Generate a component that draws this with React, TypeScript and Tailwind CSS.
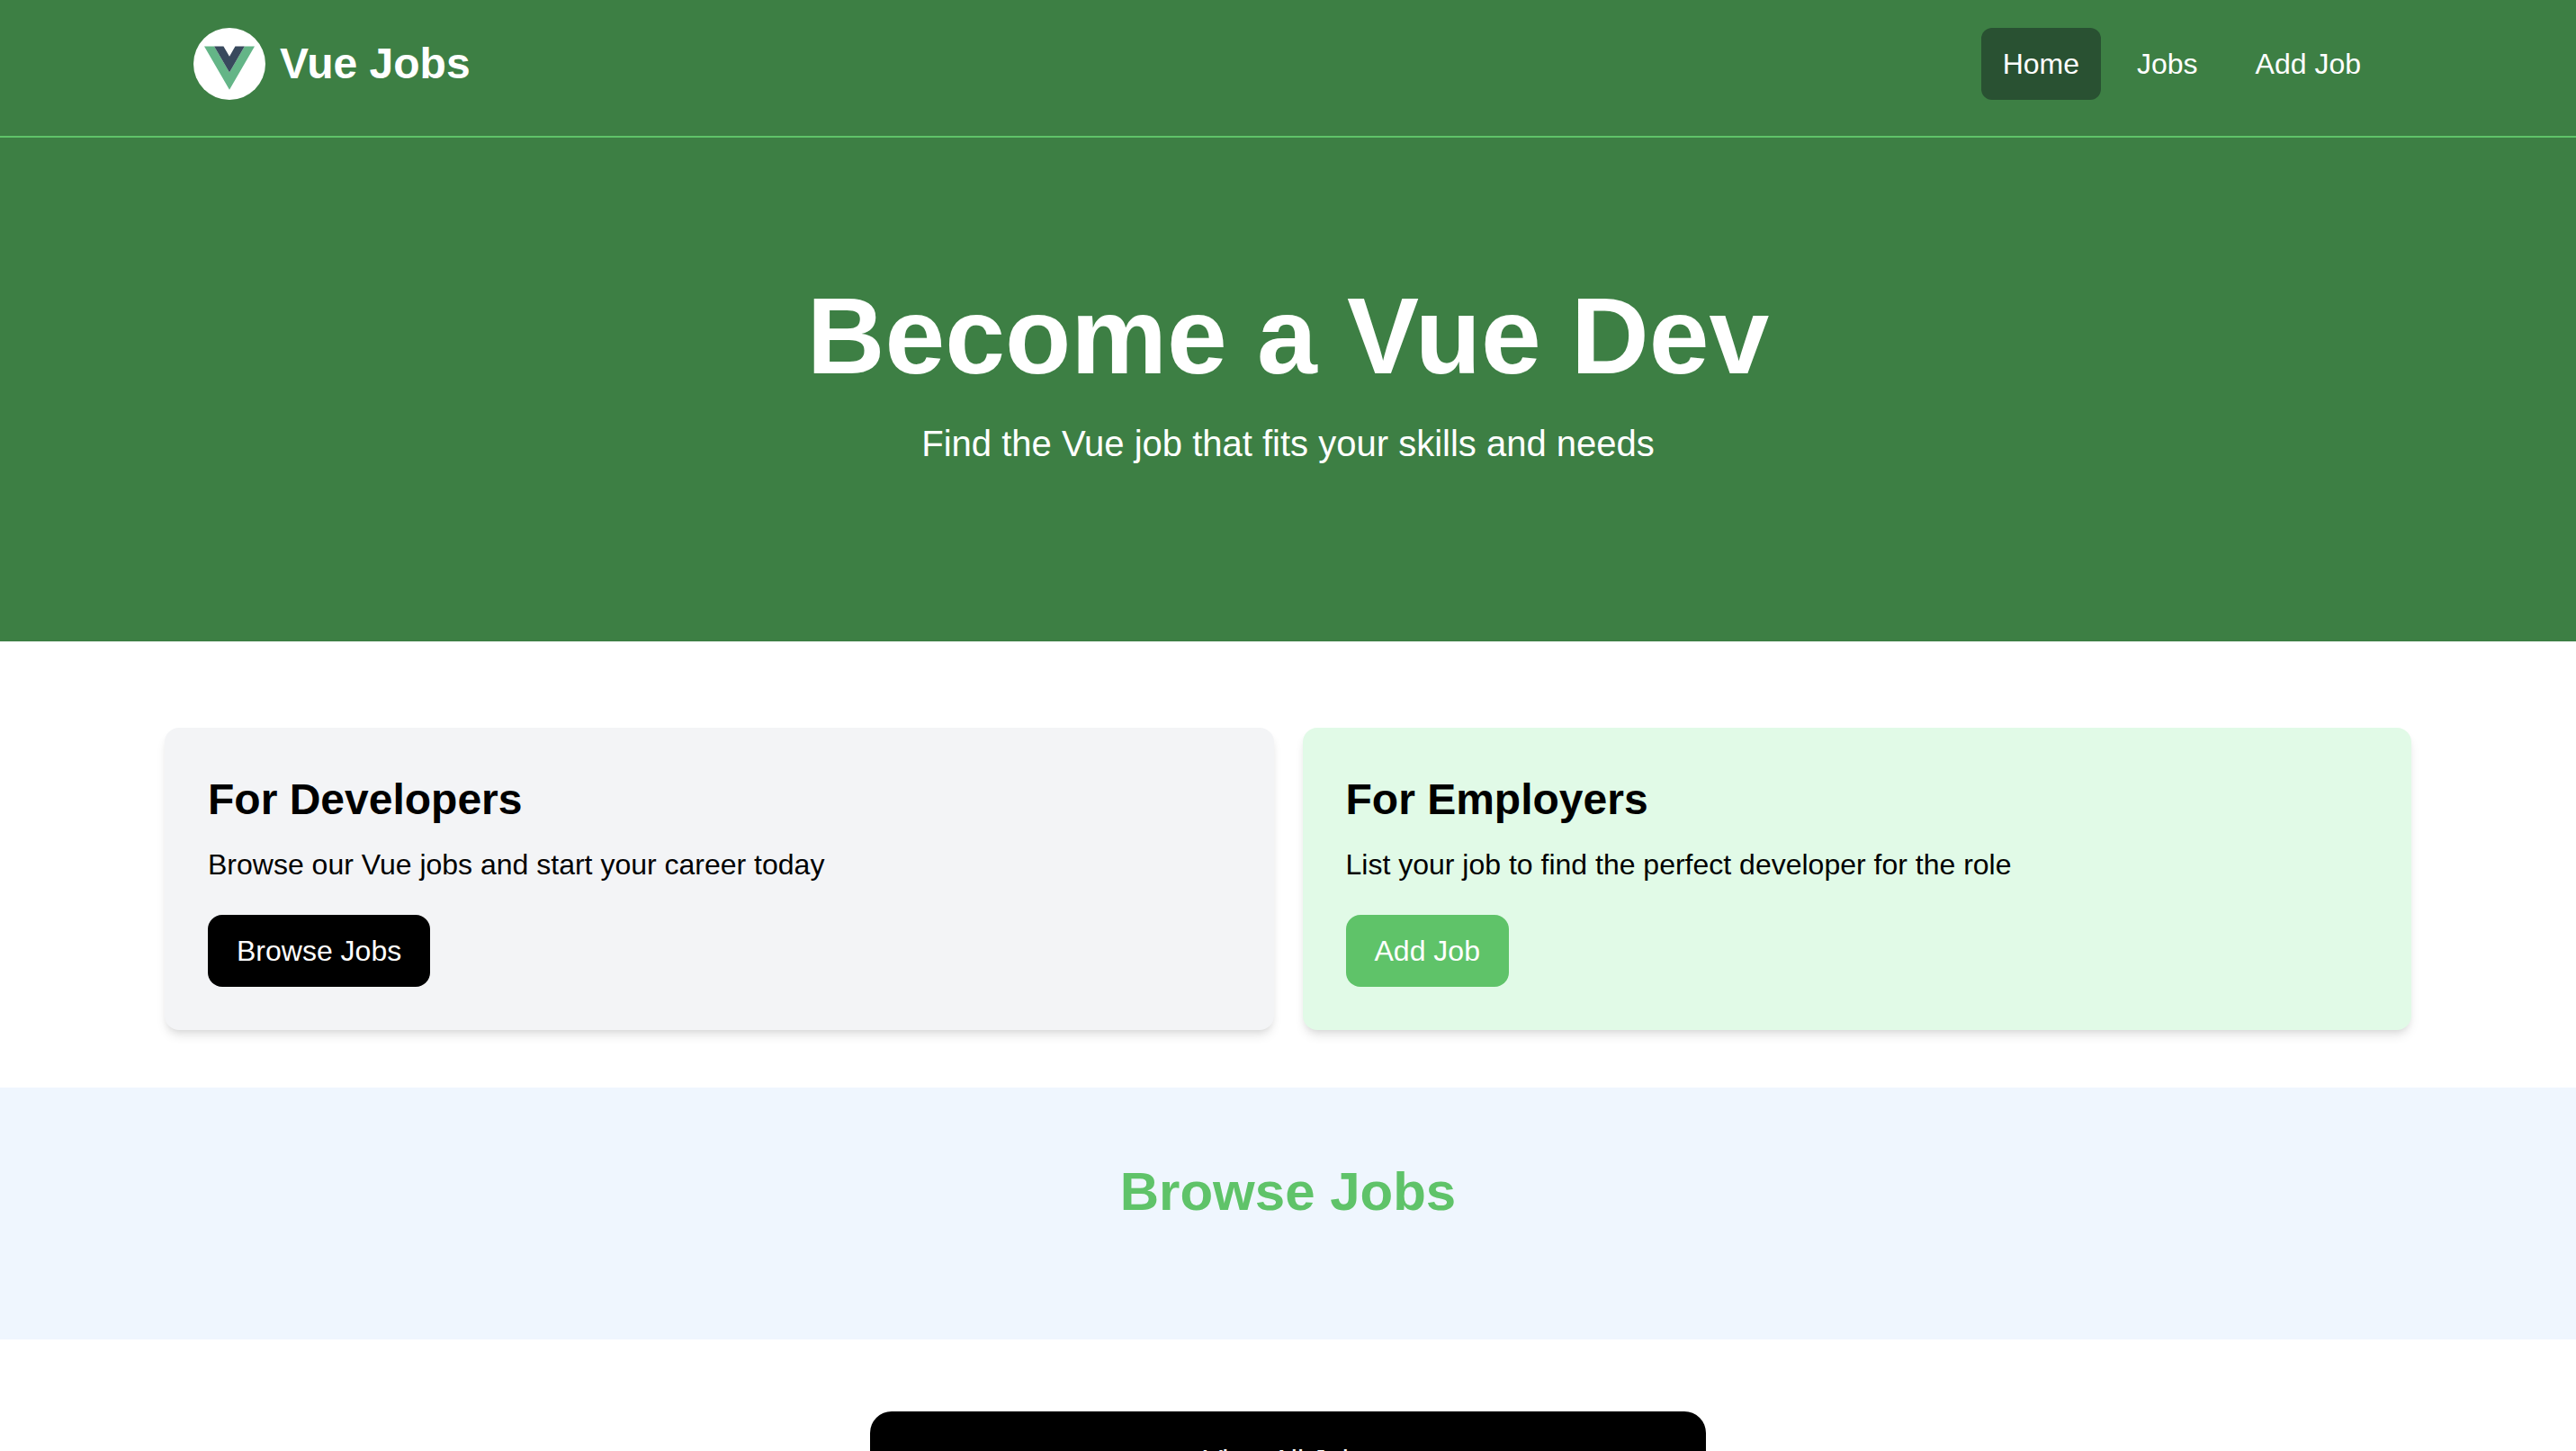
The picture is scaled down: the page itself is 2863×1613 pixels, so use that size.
import { clsx } from "clsx";

function VueLogo() {
  return (
    <svg viewBox="0 0 80 80" className="size-20 shrink-0" role="img" aria-label="Vue Jobs logo">
      <circle cx="40" cy="40" r="40" fill="#ffffff" />
      <g transform="translate(12 20.5) scale(0.21875)">
        <path d="M0 0l128 220.8L256 0h-51.2L128 132.48 50.56 0H0z" fill="#64b587" />
        <path d="M50.56 0L128 133.12 204.8 0h-47.36L128 51.2 97.92 0H50.56z" fill="#38495d" />
      </g>
    </svg>
  );
}

const links = [
  { label: "Home", href: "#home", active: true },
  { label: "Jobs", href: "#jobs", active: false },
  { label: "Add Job", href: "#add", active: false },
];

function Navbar() {
  return (
    <nav className="border-b-2 border-[#5fc369] bg-[#3d7f44]">
      <div className="mx-auto flex max-w-[2561px] items-center justify-between px-16 pt-[31px] pb-10">
        <a href="#home" className="flex items-center gap-4">
          <VueLogo />
          <span className="text-[48px] leading-16 font-bold text-white">Vue Jobs</span>
        </a>
        <div className="flex gap-4">
          {links.map((link) => (
            <a
              key={link.label}
              href={link.href}
              className={clsx(
                "rounded-xl px-6 py-4 text-[32px] leading-12 text-white",
                link.active && "bg-[#295132]",
              )}
            >
              {link.label}
            </a>
          ))}
        </div>
      </div>
    </nav>
  );
}

function Hero() {
  return (
    <section className="bg-[#3d7f44] px-16 py-40 text-center text-white">
      <h1 className="text-[120px] leading-[120px] font-bold">Become a Vue Dev</h1>
      <p className="my-8 text-[40px] leading-14">Find the Vue job that fits your skills and needs</p>
    </section>
  );
}

type CardProps = {
  title: string;
  text: string;
  action: string;
  href: string;
  cardClass: string;
  actionClass: string;
};

function Card({ title, text, action, href, cardClass, actionClass }: CardProps) {
  return (
    <div
      className={clsx(
        "rounded-2xl p-12 shadow-[0_8px_12px_-2px_rgb(0_0_0/0.1),0_4px_8px_-4px_rgb(0_0_0/0.1)]",
        cardClass,
      )}
    >
      <h2 className="text-[48px] leading-16 font-bold">{title}</h2>
      <p className="mt-4 mb-8 text-[32px] leading-12">{text}</p>
      <a
        href={href}
        className={clsx("inline-block rounded-2xl px-8 py-4 align-top text-[32px] leading-12 text-white", actionClass)}
      >
        {action}
      </a>
    </div>
  );
}

export default function App() {
  return (
    <div className="h-screen overflow-hidden bg-white font-['Liberation_Sans',Arial,sans-serif] text-black">
      <Navbar />
      <Hero />
      <section className="mx-auto grid max-w-[2561px] grid-cols-2 gap-8 px-8 pt-24 pb-16">
        <Card
          title="For Developers"
          text="Browse our Vue jobs and start your career today"
          action="Browse Jobs"
          href="#jobs"
          cardClass="bg-[#f3f4f6]"
          actionClass="bg-black"
        />
        <Card
          title="For Employers"
          text="List your job to find the perfect developer for the role"
          action="Add Job"
          href="#add"
          cardClass="bg-[#e1fae7]"
          actionClass="bg-[#5fc369]"
        />
      </section>
      <section className="bg-[#eff6fe] px-8 py-20">
        <h2 className="mb-12 text-center text-[60px] leading-[72px] font-bold text-[#5fc369]">Browse Jobs</h2>
      </section>
      <section className="mx-auto my-20 max-w-[1025px] px-12">
        <a
          href="#jobs"
          className="block rounded-3xl bg-black px-12 py-[30px] text-center text-[32px] leading-12 text-white"
        >
          View All Jobs
        </a>
      </section>
    </div>
  );
}
